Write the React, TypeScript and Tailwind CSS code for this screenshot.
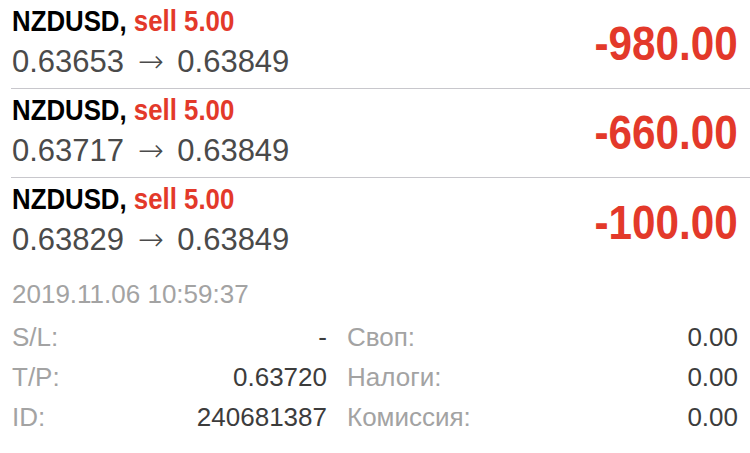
import React from "react";

const trades = [
  { open: "0.63653", close: "0.63849", profit: "-980.00" },
  { open: "0.63717", close: "0.63849", profit: "-660.00" },
  { open: "0.63829", close: "0.63849", profit: "-100.00" },
];

export default function App() {
  return (
    <div
      className="w-[750px] h-[453px] bg-white overflow-hidden"
      style={{ fontFamily: '"Liberation Sans", Arial, sans-serif' }}
    >
      {trades.map((t, i) => (
        <div key={i} className="pl-[11px]">
          <div
            className={
              "flex items-center justify-between h-[89px] pr-[12px] " +
              (i < 2 ? "border-b border-[#c8c7cc]" : "")
            }
          >
            <div className="flex flex-col self-start pt-[4px] pl-[1px]">
              <div className="text-[30px] leading-[34px] font-bold whitespace-nowrap">
                <span className="inline-block origin-left scale-x-[0.86]">
                  <span className="text-black">NZDUSD, </span>
                  <span className="text-[#e3392a]">sell 5.00</span>
                </span>
              </div>
              <div className="text-[31px] leading-[40px] text-[#4a4a4a] mt-[3px] whitespace-nowrap">
                {t.open}{" "}
                <span className="mx-[5px]" style={{ fontFamily: '"DejaVu Sans", sans-serif', fontWeight: 200 }}>→</span>{" "}
                {t.close}
              </div>
            </div>
            <div className="text-[48px] leading-[48px] font-bold text-[#e3392a] whitespace-nowrap">
              <span className="inline-block origin-right scale-x-[0.88]">{t.profit}</span>
            </div>
          </div>
        </div>
      ))}
      <div className="pl-[12px] pr-[12px]">
        <div className="text-[26px] leading-[32px] text-[#a3a3a3] mt-[11px]">
          2019.11.06 10:59:37
        </div>
        <div className="mt-[7px] grid grid-cols-[315px_1fr] gap-x-[20px] text-[26px] leading-[40px]">
          <div className="flex flex-col">
            <div className="flex justify-between"><span className="text-[#a3a3a3]">S/L:</span><span className="text-[#3c3c3c]">-</span></div>
            <div className="flex justify-between"><span className="text-[#a3a3a3]">T/P:</span><span className="text-[#3c3c3c]">0.63720</span></div>
            <div className="flex justify-between"><span className="text-[#a3a3a3]">ID:</span><span className="text-[#3c3c3c]">240681387</span></div>
          </div>
          <div className="flex flex-col">
            <div className="flex justify-between"><span className="text-[#a3a3a3]">Своп:</span><span className="text-[#3c3c3c]">0.00</span></div>
            <div className="flex justify-between"><span className="text-[#a3a3a3]">Налоги:</span><span className="text-[#3c3c3c]">0.00</span></div>
            <div className="flex justify-between"><span className="text-[#a3a3a3]">Комиссия:</span><span className="text-[#3c3c3c]">0.00</span></div>
          </div>
        </div>
      </div>
    </div>
  );
}
